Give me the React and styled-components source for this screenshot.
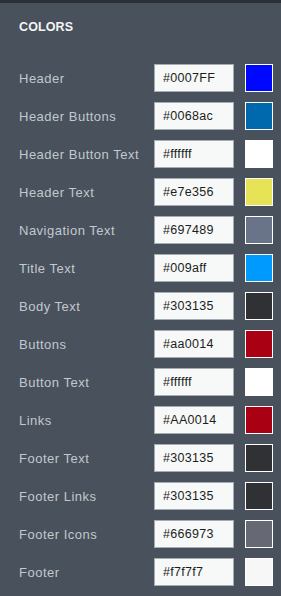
import React from 'react';
import styled, {createGlobalStyle} from 'styled-components';

const GlobalStyle = createGlobalStyle`
    html, body {
        margin: 0;
        padding: 0;
        background: #48515c;
    }
    * {
        box-sizing: border-box;
    }
`;

const Panel = styled.div`
    width: 281px;
    min-height: 596px;
    background: #48515c;
    border-top: 3px solid #2b2f36;
    font-family: "Liberation Sans", Arial, sans-serif;
    padding: 16px 8px 0 19px;
`;

const Title = styled.h2`
    margin: 0 0 29px 0;
    font-size: 12.5px;
    line-height: 16px;
    font-weight: 700;
    color: #f4f5f6;
    letter-spacing: 0.1px;
`;

const List = styled.div`
    display: flex;
    flex-direction: column;
    gap: 10px;
`;

const Row = styled.div`
    display: flex;
    align-items: center;
    height: 28px;
`;

const Label = styled.span`
    width: 135px;
    font-size: 13px;
    letter-spacing: 0.5px;
    color: #c3c8ce;
`;

const Input = styled.input`
    width: 80px;
    height: 28px;
    padding: 0 8px;
    border: 1px solid #a5acb4;
    background: #f7f9f9;
    font-family: "Liberation Sans", Arial, sans-serif;
    font-size: 12.5px;
    letter-spacing: 0.3px;
    color: #1c1d21;
    &:focus {
        outline: none;
    }
`;

const Swatch = styled.div`
    width: 28px;
    height: 28px;
    margin-left: 11px;
    border: 1px solid #ffffff;
    background: ${props => props.color};
`;

const colors = [
    {name: 'Header', value: '#0007FF'},
    {name: 'Header Buttons', value: '#0068ac'},
    {name: 'Header Button Text', value: '#ffffff'},
    {name: 'Header Text', value: '#e7e356'},
    {name: 'Navigation Text', value: '#697489'},
    {name: 'Title Text', value: '#009aff'},
    {name: 'Body Text', value: '#303135'},
    {name: 'Buttons', value: '#aa0014'},
    {name: 'Button Text', value: '#ffffff'},
    {name: 'Links', value: '#AA0014'},
    {name: 'Footer Text', value: '#303135'},
    {name: 'Footer Links', value: '#303135'},
    {name: 'Footer Icons', value: '#666973'},
    {name: 'Footer', value: '#f7f7f7'},
];

const App = () => {
    return (
        <>
            <GlobalStyle/>
            <Panel>
                <Title>COLORS</Title>
                <List>
                    {colors.map(c => (
                        <Row key={c.name}>
                            <Label>{c.name}</Label>
                            <Input type="text" defaultValue={c.value}/>
                            <Swatch color={c.value}/>
                        </Row>
                    ))}
                </List>
            </Panel>
        </>
    );
}

export default App;
